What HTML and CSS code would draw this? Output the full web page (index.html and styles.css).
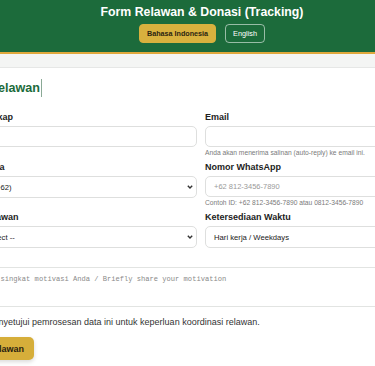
FILE: index.html
```html
<!DOCTYPE html>
<html lang="id">
<head>
  <meta charset="UTF-8">
  <meta name="viewport" content="width=device-width, initial-scale=1.0">
  <title>Form Relawan &amp; Donasi (Tracking)</title>
  <link rel="stylesheet" href="styles.css">
</head>
<body>
  <div class="page">
    <header class="topbar">
      <h1>Form Relawan &amp; Donasi (Tracking)</h1>
      <div class="lang">
        <button type="button" class="lang-btn active">Bahasa Indonesia</button>
        <button type="button" class="lang-btn">English</button>
      </div>
    </header>

    <main class="main">
      <div class="card">
        <h2>Daftar Relawan<span class="caret"></span></h2>
        <form id="volunteerForm" class="form-grid">
          <div class="form-group">
            <label for="name">Nama Lengkap</label>
            <input type="text" id="name">
          </div>
          <div class="form-group">
            <label for="email">Email</label>
            <input type="email" id="email">
            <p class="hint">Anda akan menerima salinan (auto-reply) ke email ini.</p>
          </div>
          <div class="form-group">
            <label for="country">Kode Negara</label>
            <select id="country">
              <option>Indonesia (+62)</option>
            </select>
          </div>
          <div class="form-group">
            <label for="phone">Nomor WhatsApp</label>
            <input type="tel" id="phone" placeholder="+62 812-3456-7890">
            <p class="hint">Contoh ID: +62 812-3456-7890 atau 0812-3456-7890</p>
          </div>
          <div class="form-group">
            <label for="role">Bidang Relawan</label>
            <select id="role">
              <option>-- Pilih / Select --</option>
            </select>
          </div>
          <div class="form-group">
            <label for="time">Ketersediaan Waktu</label>
            <select id="time">
              <option>Hari kerja / Weekdays</option>
            </select>
          </div>
          <div class="form-group full">
            <label for="motivation">Motivasi</label>
            <textarea id="motivation" placeholder="Ceritakan singkat motivasi Anda / Briefly share your motivation"></textarea>
          </div>
          <div class="consent full">
            <input type="checkbox" id="agree">
            <label for="agree">Saya menyetujui pemrosesan data ini untuk keperluan koordinasi relawan.</label>
          </div>
          <div class="full">
            <button type="submit" class="btn">Daftar Relawan</button>
          </div>
        </form>
      </div>
    </main>
  </div>
</body>
</html>
```

FILE: styles.css
```css
* {
  margin: 0;
  padding: 0;
  box-sizing: border-box;
  font-family: 'Liberation Sans', Arial, sans-serif;
}

html,
body {
  overflow: hidden;
}

body {
  background-color: #f4f5f4;
  color: #222;
}

.page {
  width: 604px;
  margin-left: -100px;
}

.topbar {
  height: 54px;
  background-color: #1c6b3b;
  border-bottom: 2px solid #e0a83c;
  text-align: center;
  padding-top: 4px;
}

.topbar h1 {
  color: #fff;
  font-size: 12.3px;
  line-height: 16px;
  font-weight: bold;
}

.lang {
  display: flex;
  justify-content: center;
  gap: 9px;
  margin-top: 4px;
}

.lang-btn {
  height: 19px;
  padding: 0 7px;
  font-size: 7.3px;
  color: #fff;
  background: transparent;
  border: 1px solid rgba(255, 255, 255, 0.55);
  border-radius: 4px;
  cursor: pointer;
}

.lang-btn.active {
  background-color: #d8b13e;
  border-color: #d8b13e;
  color: #2b2410;
  font-weight: bold;
  font-size: 7.2px;
}

.main {
  padding-top: 13px;
}

.card {
  max-width: 556px;
  margin: 0 auto;
  background: #fff;
  border: 1px solid #e6e7e6;
  border-radius: 8px;
  padding: 11px 24px 24px;
}

.card h2 {
  color: #1c6b3b;
  font-size: 12.6px;
  line-height: 18px;
  font-weight: bold;
}

.caret {
  display: inline-block;
  width: 1px;
  height: 18px;
  margin-left: 1px;
  vertical-align: top;
  background: #8aa996;
}

.form-grid {
  display: grid;
  grid-template-columns: 248px 248px;
  column-gap: 8px;
  row-gap: 4px;
  margin-top: 14px;
}

.full {
  grid-column: 1 / -1;
}

.form-group label {
  display: block;
  font-size: 9px;
  line-height: 12px;
  font-weight: bold;
  color: #222;
  margin-bottom: 3px;
}

.form-group input,
.form-group select {
  display: block;
  width: 100%;
  height: 21px;
  padding: 0 8px;
  font-size: 7.5px;
  color: #222;
  background: #fff;
  border: 1px solid #dedfde;
  border-radius: 5px;
  outline: none;
}

.form-group select {
  height: 22px;
  font-size: 7.7px;
  appearance: none;
  background-image: url("data:image/svg+xml,%3Csvg xmlns='http://www.w3.org/2000/svg' width='6' height='4' viewBox='0 0 6 4'%3E%3Cpolyline points='0.8,0.8 3,3 5.2,0.8' fill='none' stroke='%23333' stroke-width='1.4'/%3E%3C/svg%3E");
  background-repeat: no-repeat;
  background-position: right 3px center;
  background-size: 6px 4px;
}

.form-group input::placeholder {
  color: #9a9a9a;
}

.form-group textarea {
  display: block;
  width: 100%;
  height: 40px;
  padding: 7px 8px;
  font-family: 'Liberation Mono', monospace;
  font-size: 7.1px;
  line-height: 9px;
  border: 1px solid #e2e4e2;
  border-radius: 5px;
  resize: none;
  outline: none;
}

.form-group textarea::placeholder {
  color: #8a8a8a;
}

.hint {
  margin-top: 2px;
  font-size: 6.7px;
  line-height: 8px;
  color: #7a7a7a;
}

.consent {
  display: flex;
  align-items: center;
  gap: 5px;
  margin-top: 5px;
  font-size: 9px;
  line-height: 12px;
  color: #333;
}

.consent input {
  width: 9px;
  height: 9px;
}

.btn {
  margin-top: 5px;
  height: 23px;
  padding: 0 10px;
  font-size: 9px;
  font-weight: bold;
  color: #2a2110;
  background-color: #d6ae3a;
  border: none;
  border-radius: 5px;
  box-shadow: 0 2px 4px rgba(0, 0, 0, 0.15);
  cursor: pointer;
}
```
